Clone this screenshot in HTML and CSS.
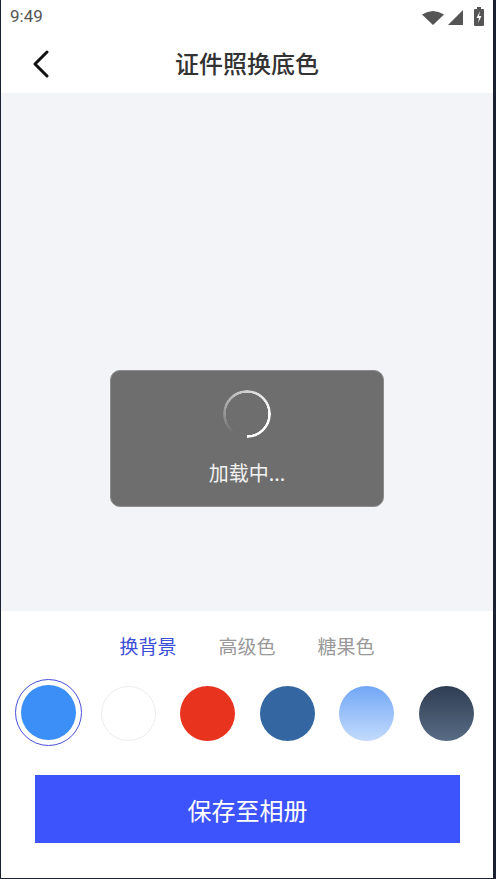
FILE: index.html
```html
<!DOCTYPE html>
<html lang="zh-CN">

<head>
  <meta charset="UTF-8">
  <meta name="viewport" content="width=device-width, initial-scale=1.0">
  <title>证件照换底色</title>
  <link rel="stylesheet" href="styles.css">
</head>

<body>
  <div class="screen">
    <div class="status-bar">
      <span class="time">9:49</span>
      <div class="status-icons">
        <svg width="22" height="14" viewBox="0 0 22 14">
          <path d="M0 3.5 Q11 -3.5 22 3.5 L11 14 Z" fill="#555" />
        </svg>
        <svg width="15" height="15" viewBox="0 0 15 15">
          <path d="M0 15 L15 0 L15 15 Z" fill="#555" />
        </svg>
        <svg class="battery" width="10" height="19" viewBox="0 0 10 19">
          <rect x="3" y="0" width="4" height="2" fill="#555" />
          <rect x="0" y="2" width="10" height="17" rx="1" fill="#555" />
          <path d="M6 4 L2.5 11 L5 11 L4 16 L7.5 9 L5 9 Z" fill="#fff" />
        </svg>
      </div>
    </div>

    <header class="nav-bar">
      <button class="back-btn" aria-label="返回">
        <svg width="18" height="28" viewBox="0 0 18 28">
          <polyline points="15,2 3,14 15,26" fill="none" stroke="#111" stroke-width="3" stroke-linecap="round" stroke-linejoin="round" />
        </svg>
      </button>
      <h1 class="nav-title">证件照换底色</h1>
    </header>

    <div class="stage"></div>

    <div class="panel">
      <div class="tabs">
        <span class="tab active">换背景</span>
        <span class="tab">高级色</span>
        <span class="tab">糖果色</span>
      </div>

      <div class="swatches">
        <div class="swatch-cell selected"><span class="swatch blue"></span></div>
        <div class="swatch-cell"><span class="swatch white"></span></div>
        <div class="swatch-cell"><span class="swatch red"></span></div>
        <div class="swatch-cell"><span class="swatch navy"></span></div>
        <div class="swatch-cell"><span class="swatch sky"></span></div>
        <div class="swatch-cell"><span class="swatch slate"></span></div>
      </div>

      <button class="save-btn">保存至相册</button>
    </div>

    <div class="toast">
      <div class="spinner"></div>
      <div class="toast-text">加载中...</div>
    </div>
  </div>
</body>

</html>
```

FILE: styles.css
```css
body {
  margin: 0;
  background-color: #1c2132;
  font-family: "Noto Sans CJK SC", "Noto Sans", sans-serif;
}

.screen {
  position: relative;
  width: 492px;
  height: 878px;
  margin-left: 1px;
  background-color: #fff;
  display: flex;
  flex-direction: column;
}

.status-bar {
  height: 33px;
  display: flex;
  align-items: center;
  justify-content: space-between;
  padding: 0 9px 0 9px;
  box-sizing: border-box;
}

.time {
  font-family: Roboto, sans-serif;
  font-size: 17px;
  color: #555;
  margin-top: -1px;
}

.status-icons {
  display: flex;
  align-items: flex-end;
  gap: 4px;
  margin-top: -2px;
}

.status-icons .battery {
  margin-left: 7px;
  margin-bottom: -1px;
}

.nav-bar {
  height: 60px;
  display: flex;
  align-items: center;
  justify-content: center;
  position: relative;
}

.back-btn {
  position: absolute;
  left: 31px;
  top: 17px;
  background: none;
  border: none;
  padding: 0;
  cursor: pointer;
}

.nav-title {
  margin: 0;
  font-size: 24px;
  font-weight: 500;
  color: #333;
  margin-top: -1px;
}

.stage {
  flex: 1;
  background-color: #f3f4f8;
}

.panel {
  height: 267px;
  padding-top: 23px;
  box-sizing: border-box;
  background-color: #fff;
}

.tabs {
  display: flex;
  justify-content: center;
  gap: 42px;
  line-height: 24px;
  font-size: 19px;
  color: #999;
}

.tab.active {
  color: #3b4fd6;
}

.swatches {
  display: grid;
  grid-template-columns: repeat(6, 1fr);
  padding: 0 7px 0 8px;
  margin-top: 21px;
  height: 68px;
}

.swatch-cell {
  display: flex;
  align-items: center;
  justify-content: center;
}

.swatch-cell.selected {
  width: 65px;
  height: 65px;
  justify-self: center;
  border: 1.5px solid #4a4fd8;
  border-radius: 50%;
}

.swatch {
  width: 55px;
  height: 55px;
  border-radius: 50%;
  box-sizing: border-box;
}

.swatch.blue {
  background-color: #3d8ff8;
}

.swatch.white {
  background-color: #fff;
  border: 1px solid #ececec;
}

.swatch.red {
  background-color: #e8341f;
}

.swatch.navy {
  background-color: #3467a2;
}

.swatch.sky {
  background: linear-gradient(to bottom, #72a7f6, #c3dbfc);
}

.swatch.slate {
  background: linear-gradient(to bottom, #2f3d52, #586c85);
}

.save-btn {
  display: block;
  width: 425px;
  height: 68px;
  margin: 28px 0 0 34px;
  border: none;
  background-color: #3d54fc;
  color: #fff;
  font-family: "Noto Sans CJK SC", sans-serif;
  font-size: 24px;
  cursor: pointer;
}

.toast {
  position: absolute;
  left: 109px;
  top: 370px;
  width: 274px;
  height: 137px;
  box-sizing: border-box;
  background-color: #6e6e6e;
  border: 1px solid #8c8c8c;
  border-radius: 10px;
  display: flex;
  flex-direction: column;
  align-items: center;
}

.spinner {
  width: 48px;
  height: 48px;
  margin-top: 19px;
  border-radius: 50%;
  background: conic-gradient(from 215deg, rgba(255, 255, 255, 0) 0deg, rgba(255, 255, 255, 0.6) 120deg, #fff 240deg, #fff 325deg, rgba(255, 255, 255, 0) 325deg);
  -webkit-mask: radial-gradient(circle, transparent 21px, #000 21.5px);
  mask: radial-gradient(circle, transparent 21px, #000 21.5px);
}

.toast-text {
  margin-top: 21px;
  font-size: 20px;
  color: #f2f2f2;
  line-height: 28px;
}
```
